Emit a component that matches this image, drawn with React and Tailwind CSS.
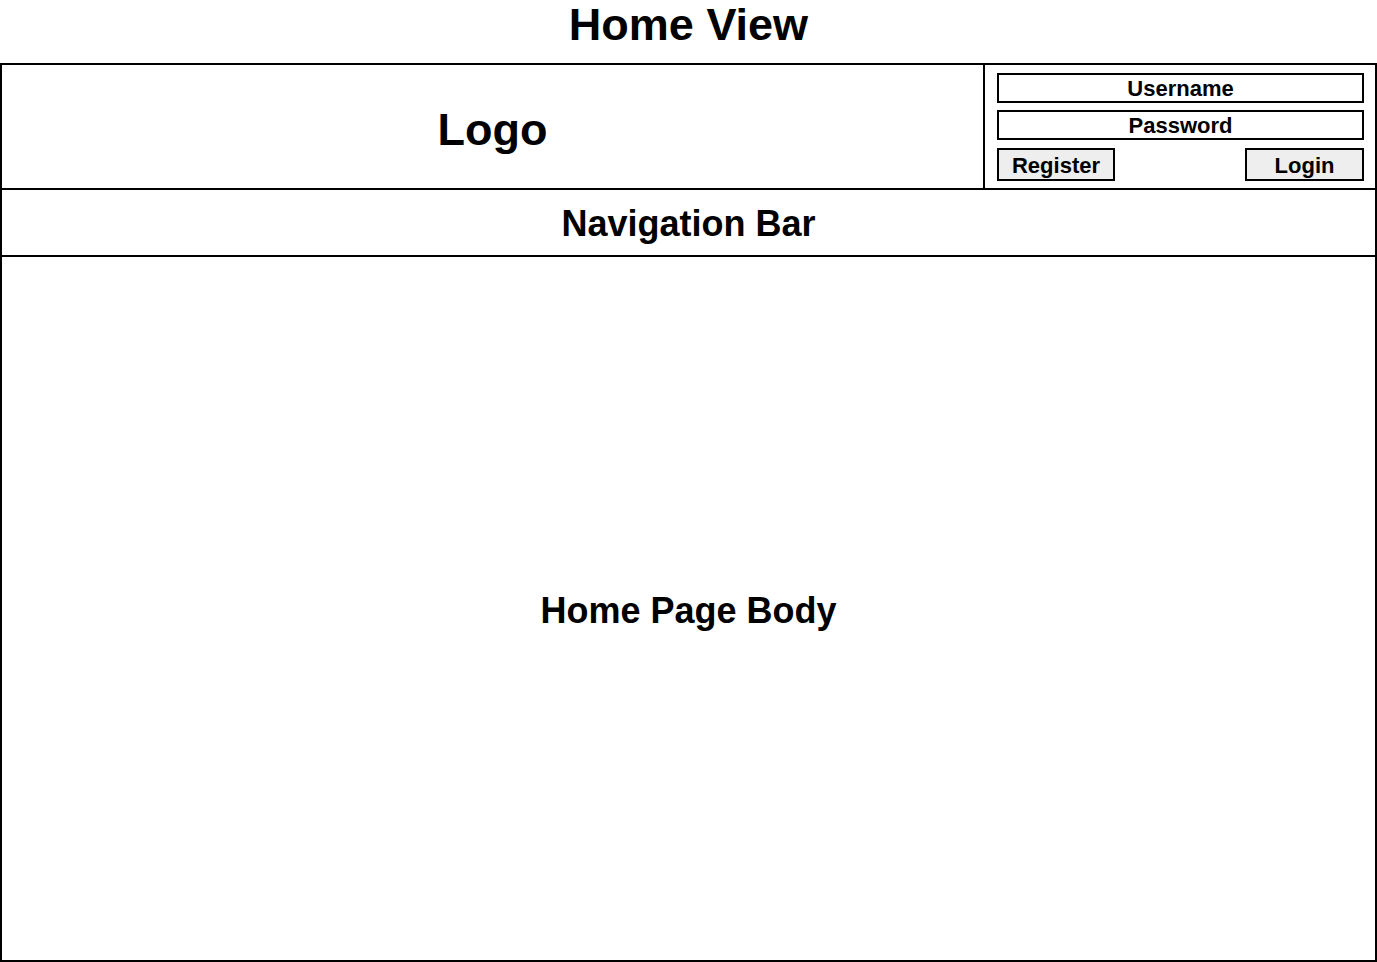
export default function App() {
  return (
    <div
      className="w-[1377px] h-[962px] bg-white text-black flex flex-col overflow-hidden"
      style={{ fontFamily: '"Liberation Sans", Arial, sans-serif' }}
    >
      <div className="h-[63px] shrink-0 flex justify-center pt-[2px]">
        <h1 className="text-[45px] leading-none font-bold">Home View</h1>
      </div>
      <div className="flex-1 border-2 border-black flex flex-col">
        <div className="h-[125px] shrink-0 border-b-2 border-black flex">
          <div className="w-[983px] shrink-0 border-r-2 border-black flex items-center justify-center pt-[6px]">
            <span className="text-[45px] leading-none font-bold">Logo</span>
          </div>
          <div className="flex-1 flex flex-col pt-[8px] pl-[12px] pr-[11px]">
            <div className="h-[30px] border-2 border-black flex items-center justify-center pt-[2px] text-[22px] leading-none font-bold">
              Username
            </div>
            <div className="h-[30px] mt-[7px] border-2 border-black flex items-center justify-center pt-[2px] text-[22px] leading-none font-bold">
              Password
            </div>
            <div className="mt-[8px] flex justify-between">
              <button className="w-[118px] h-[33px] border-2 border-black bg-[#eeeeee] flex items-center justify-center pt-[2px] text-[22px] leading-none font-bold">
                Register
              </button>
              <button className="w-[119px] h-[33px] border-2 border-black bg-[#eeeeee] flex items-center justify-center pt-[2px] text-[22px] leading-none font-bold">
                Login
              </button>
            </div>
          </div>
        </div>
        <div className="h-[67px] shrink-0 border-b-2 border-black flex items-center justify-center pt-[2px]">
          <span className="text-[36px] leading-none font-bold">Navigation Bar</span>
        </div>
        <div className="flex-1 flex items-center justify-center pt-[4px]">
          <span className="text-[36px] leading-none font-bold">Home Page Body</span>
        </div>
      </div>
    </div>
  );
}
